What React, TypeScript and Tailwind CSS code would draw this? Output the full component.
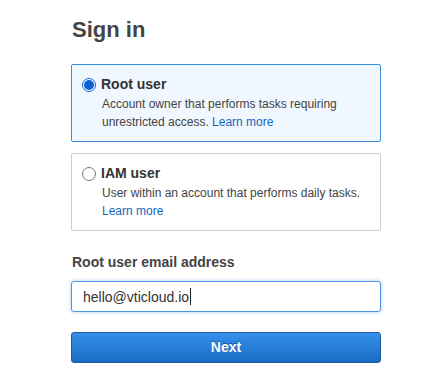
import React from "react";

const Radio: React.FC<{ checked?: boolean }> = ({ checked }) => {
  return (
    <span
      className={
        "mt-[3px] flex h-[14px] w-[14px] shrink-0 items-center justify-center rounded-full border bg-white " +
        (checked ? "border-[#0b62d6]" : "border-[#767676]")
      }
    >
      {checked && <span className="h-[10px] w-[10px] rounded-full bg-[#0b62d6]" />}
    </span>
  );
};

const App: React.FC = () => {
  return (
    <div className="min-h-[389px] w-[436px] bg-white font-['Liberation_Sans',Arial,sans-serif] text-[#444]">
      <div className="ml-[71px] w-[310px] pt-[16px]">
        {/* Title */}
        <h1 className="pl-[1px] text-[22px] font-bold leading-[28px] text-[#444]">Sign in</h1>

        {/* Account type */}
        <div className="mt-[20px] flex h-[78px] gap-[5px] rounded-[2px] border border-[#3d8fe0] bg-[#f0f7fe] px-[10px] pt-[10px]">
          <Radio checked />
          <div>
            <div className="text-[14px] font-bold leading-[18px] text-[#333]">Root user</div>
            <p className="mt-[2px] pl-[1px] text-[12px] leading-[18px] text-[#444]">
              Account owner that performs tasks requiring unrestricted access.{" "}
              <span className="text-[#1565c0]">Learn more</span>
            </p>
          </div>
        </div>

        <div className="mt-[11px] flex h-[78px] gap-[5px] rounded-[2px] border border-[#cfcfcf] bg-white px-[10px] pt-[10px]">
          <Radio />
          <div>
            <div className="text-[14px] font-bold leading-[18px] text-[#333]">IAM user</div>
            <p className="mt-[2px] pl-[1px] text-[12px] leading-[18px] text-[#444]">
              User within an account that performs daily tasks.
              <br />
              <span className="text-[#1565c0]">Learn more</span>
            </p>
          </div>
        </div>

        {/* Email */}
        <label className="mt-[22px] block pl-[1px] text-[14px] font-bold leading-[18px] text-[#444]">
          Root user email address
        </label>
        <div className="mt-[10px] flex h-[31px] items-center rounded-[3px] border border-[#4a94e3] bg-white px-[11px] shadow-[0_0_4px_rgba(74,148,227,0.45)]">
          <span className="text-[14px] leading-[18px] text-[#333]">hello@vticloud.io</span>
          <span className="ml-[1px] h-[17px] w-px bg-[#222]" />
        </div>

        <button className="mt-[20px] flex h-[31px] w-full items-center justify-center rounded-[3px] border border-[#1a5ba3] bg-gradient-to-b from-[#3590ea] to-[#1a6bc4] text-[14px] font-bold text-white [text-shadow:0_-1px_0_rgba(0,0,0,0.35)]">
          Next
        </button>
      </div>
    </div>
  );
};

export default App;
